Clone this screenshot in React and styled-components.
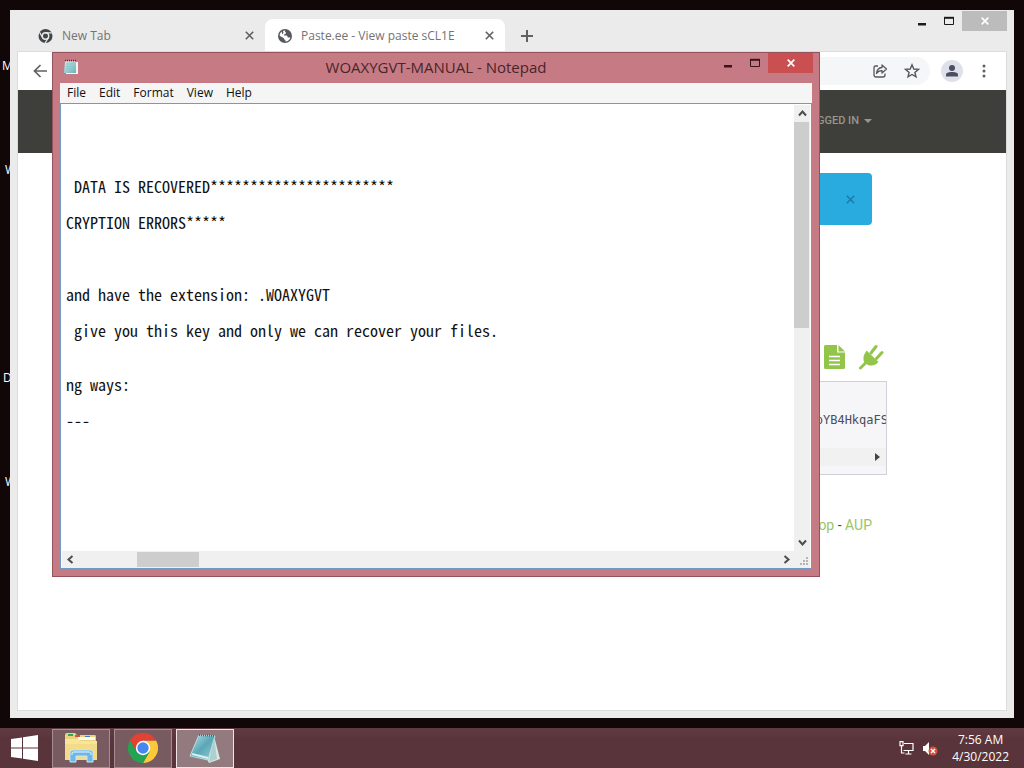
import React from "react";
import styled, { createGlobalStyle } from "styled-components";

const ui = `"Open Sans", "Noto Sans", sans-serif`;

const Global = createGlobalStyle`
  *, *::before, *::after { box-sizing: border-box; }
  html, body { margin: 0; height: 100%; }
  body { background: #110708; font-family: ${ui}; font-size: 12px; overflow: hidden; }
  #root { height: 100%; }
  button { font: inherit; color: inherit; background: none; border: 0; padding: 0; display: flex; align-items: center; justify-content: center; }
  svg { display: block; }
`;

const Desktop = styled.div`
  height: 100vh;
  display: flex;
  flex-direction: column;
  background: #120708;
`;

const Workspace = styled.main`
  position: relative;
  flex: 1;
  min-height: 0;
  display: flex;
  padding: 10px;
`;

const Shortcut = styled.a`
  position: absolute;
  left: ${(p) => p.$x}px;
  top: ${(p) => p.$y}px;
  color: #fff;
  font-size: 12px;
  line-height: 16px;
  text-decoration: none;
`;

/* Browser window */
const Browser = styled.section`
  position: relative;
  flex: 1;
  min-width: 0;
  display: flex;
  flex-direction: column;
  background: #ebebeb;
  padding: 0 8px 8px;
`;

const TabStrip = styled.div`
  display: flex;
  align-items: flex-end;
  height: 42px;
  padding-left: 7px;
`;

const Tab = styled.div`
  display: flex;
  align-items: center;
  gap: 9px;
  width: 240px;
  height: 33px;
  padding: 0 9px 0 13px;
  border-radius: 8px 8px 0 0;
  color: #737373;
  background: ${(p) => (p.$active ? "#fff" : "transparent")};
`;

const TabTitle = styled.span`
  flex: 1;
  white-space: nowrap;
  line-height: 16px;
`;

const TabButton = styled.button`
  width: 14px;
  height: 14px;
  color: #5f6063;
`;

const NewTab = styled(TabButton)`
  width: 44px;
  height: 33px;
`;

const Captions = styled.div`
  position: absolute;
  top: ${(p) => p.$top}px;
  right: ${(p) => p.$right}px;
  display: flex;
  color: ${(p) => p.$ink};
`;

const CaptionButton = styled.button`
  width: 27px;
  height: 20px;
`;

const CloseButton = styled(CaptionButton)`
  width: 45px;
  color: #fff;
  background: ${(p) => p.$fill};
`;

const View = styled.div`
  flex: 1;
  min-height: 0;
  display: flex;
  flex-direction: column;
  background: #fff;
  box-shadow: 0 0 0 1px #dcdcdc;
`;

const Toolbar = styled.div`
  display: flex;
  align-items: center;
  height: 38px;
  padding: 0 15px;
  color: #55585c;
`;

const AddressBar = styled.div`
  flex: 1;
  display: flex;
  align-items: center;
  justify-content: flex-end;
  gap: 16px;
  height: 28px;
  margin: 0 11px 0 60px;
  padding-right: 10px;
  border-radius: 14px;
  background: #f5f6f7;
`;

const Profile = styled.button`
  width: 22px;
  height: 22px;
  border-radius: 50%;
  background: #dfe1ea;
  margin-right: 14px;
`;

const NavBar = styled.nav`
  height: 63px;
  background: #3e3f3a;
  color: #98978b;
  font: 500 11px/22px Roboto, sans-serif;
`;

const Container = styled.div`
  display: flex;
  flex-direction: column;
  width: 750px;
  max-width: 100%;
  margin: 0 auto;
  padding: ${(p) => p.$pad || "0 15px"};
`;

const NavLink = styled.a`
  display: flex;
  align-items: center;
  align-self: flex-end;
  gap: 5px;
  padding: 20px 0;
  color: inherit;
  text-decoration: none;
`;

const Alert = styled.div`
  display: flex;
  align-items: center;
  justify-content: flex-end;
  height: 52px;
  padding-right: 17px;
  border-radius: 4px;
  background: #29abe0;
  color: #1c7ba5;
`;

const PasteTools = styled.div`
  display: flex;
  justify-content: flex-end;
  align-items: center;
  gap: 13px;
  margin-top: 119px;
  margin-right: -12px;
  color: #93c54b;
`;

const Paste = styled.div`
  display: flex;
  flex-direction: column;
  justify-content: flex-end;
  height: 94px;
  margin: 11px -15px 0;
  border: 1px solid #ced0da;
  background: #f6f6f9;
  color: #4c4d55;
  overflow: hidden;
`;

const Code = styled.code`
  align-self: flex-end;
  font: 12px/16px "DejaVu Sans Mono", monospace;
  margin-right: -2px;
`;

const PasteScroll = styled.div`
  display: flex;
  align-items: center;
  justify-content: flex-end;
  height: 18px;
  margin: 20px 0 8px;
  padding-right: 6px;
  background: #f1f1f2;
`;

const PageFooter = styled.footer`
  align-self: flex-end;
  margin-top: 40px;
  font: 14px/20px Roboto, sans-serif;
  color: #4a4a4a;
  a { color: #9dc468; text-decoration: none; }
`;

/* Notepad window */
const Notepad = styled.section`
  position: absolute;
  left: 52px;
  top: 52px;
  width: 75%;
  height: 525px;
  display: flex;
  flex-direction: column;
  padding: 0 7px 7px;
  border: 1px solid #94525c;
  background: #c67b84;
`;

const TitleBar = styled.header`
  display: flex;
  align-items: center;
  height: 30px;
  padding: 0 0 2px 4px;
`;

const WindowTitle = styled.h1`
  flex: 1;
  margin: 0 18px 0 0;
  font-size: 15px;
  font-weight: 400;
  line-height: 20px;
  text-align: center;
  color: #4a2429;
`;

const MenuBar = styled.div`
  display: flex;
  gap: 13px;
  height: 20px;
  padding: 0 0 2px 7px;
  background: #f5f5f5;
  color: #111;
`;

const Editor = styled.div`
  flex: 1;
  min-height: 0;
  display: grid;
  grid-template-columns: minmax(0, 1fr) 16px;
  grid-template-rows: minmax(0, 1fr) 17px;
  padding: 1px 1px 0;
  border: 1px solid #6f9cc4;
  background: #fff;
`;

const Note = styled.textarea`
  border: 0;
  outline: 0;
  resize: none;
  margin: 0;
  padding: 0 4px;
  overflow: hidden;
  white-space: pre;
  color: #111;
  background: #fff;
  font: 16px/18px "Noto Sans Mono CJK SC", "DejaVu Sans Mono", monospace;
`;

const Bar = styled.div`
  display: flex;
  flex-direction: ${(p) => (p.$vertical ? "column" : "row")};
  justify-content: space-between;
  background: #f0f0f0;
  color: #4d4d4d;
`;

const Arrow = styled.button`
  width: 16px;
  height: 17px;
`;

const Track = styled.div`
  flex: 1;
  display: flex;
  flex-direction: ${(p) => (p.$vertical ? "column" : "row")};
  padding-left: ${(p) => (p.$vertical ? 0 : "59px")};
`;

const Thumb = styled.div`
  width: ${(p) => (p.$vertical ? "15px" : "62px")};
  height: ${(p) => (p.$vertical ? "50%" : "15px")};
  margin-top: ${(p) => (p.$vertical ? 0 : "1px")};
  background: #cdcdcd;
`;

const Grip = styled.div`
  display: flex;
  align-items: flex-end;
  justify-content: flex-end;
  background: #f0f0f0;
`;

/* Taskbar */
const Taskbar = styled.footer`
  display: flex;
  align-items: center;
  gap: 4px;
  height: 40px;
  padding-right: 15px;
  background: linear-gradient(#603b41, #59343a 30%, #58343b);
  color: #fff;
`;

const Start = styled.button`
  width: 48px;
  height: 40px;
`;

const TaskButton = styled.button`
  width: 58px;
  height: 39px;
  border: 1px solid ${(p) => (p.$active ? "#f0e4e6" : "#a58d92")};
  background: ${(p) => (p.$active ? "#927a7f" : "#785b61")};
`;

const Tray = styled.div`
  flex: 1;
  display: flex;
  align-items: center;
  justify-content: flex-end;
  gap: 9px;
`;

const Clock = styled.time`
  margin-left: 5px;
  font-size: 12px;
  line-height: 17px;
  text-align: center;
`;

const Cross = ({ size = 9, width = 1.6 }) => (
  <svg width={size} height={size} viewBox="0 0 9 9" stroke="currentColor" strokeWidth={width} fill="none">
    <path d="M.8 .8 8.2 8.2M8.2 .8.8 8.2" />
  </svg>
);

const Chevron = ({ d }) => (
  <svg width="9" height="9" viewBox="0 0 9 9" stroke="currentColor" strokeWidth="2" fill="none"><path d={d} /></svg>
);

const WindowCaptions = ({ top, right, ink, fill }) => (
  <Captions $top={top} $right={right} $ink={ink}>
    <CaptionButton aria-label="Minimize">
      <svg width="8" height="20" viewBox="0 0 8 20"><path d="M0 12h8v2.500H0z" fill="currentColor" /></svg>
    </CaptionButton>
    <CaptionButton aria-label="Maximize">
      <svg width="10" height="20" viewBox="0 0 10 20" fill="none" stroke="currentColor"><path d="M.5 6.500h9v7h-9z" /><path d="M0 6.800h10" strokeWidth="2" /></svg>
    </CaptionButton>
    <CloseButton aria-label="Close" $fill={fill}><Cross size={8} width={1.9} /></CloseButton>
  </Captions>
);

const MonoChrome = () => (
  <svg width="15" height="14" viewBox="0 0 14 14">
    <circle cx="7" cy="7" r="7" fill="#44474a" />
    <circle cx="7" cy="7" r="3.200" fill="#44474a" stroke="#ebebeb" strokeWidth="1.400" />
    <path d="M7 3.800h6.300M4.200 8.600 1 3.200M9.800 8.600 6.600 14" stroke="#ebebeb" strokeWidth="1.200" />
  </svg>
);

const Globe = () => (
  <svg width="14" height="14" viewBox="0 0 14 14">
    <circle cx="7" cy="7" r="7" fill="#55595d" />
    <path d="M7.500 1.400C6.800 1.800 6.800 2.800 7.500 3.300 8.400 3.600 8 4.800 7 5 6 5.200 6.300 6.300 5.500 6.500H8.500C9.800 6.500 9 8.500 10.500 8.500H12.400C12 10.800 10 12.500 7.400 12.600V10.800C6.200 10.800 5.800 10 5.800 9 4.500 8.500 2.600 7.500 1.500 6.200 2 3.300 4.500 1.400 7.500 1.400Z" fill="#fff" />
    <path d="M4 2.200C5.500 3 4 4 5 4.600" stroke="#55595d" strokeWidth="1.500" fill="none" />
  </svg>
);

const NoteIcon = () => (
  <svg width="14" height="16" viewBox="0 0 14 16">
    <defs><linearGradient id="page" x2="1" y2="1"><stop stopColor="#c8eaea" /><stop offset="1" stopColor="#6cb2bb" /></linearGradient></defs>
    <path d="M2 3h12v12H2z" fill="#f2f4ed" />
    <path d="M1 2h11v12H0z" fill="url(#page)" />
    <path d="M1 1.500h12" stroke="#35393c" strokeWidth="1.500" strokeDasharray="1 1" />
    <path d="M2 5h8M2 7.500h8M2 10h8" stroke="#8ac6cb" />
  </svg>
);

const Explorer = () => (
  <svg width="34" height="32" viewBox="0 0 34 32">
    <path d="M1 3q0-2 2-2h8l2 2h18q1 0 1 2v22H1z" fill="#ead27b" />
    <path d="M4 2h5v2H4z" fill="#2da85d" /><path d="M11 3h5v2h-5z" fill="#d84d3d" /><path d="M21 4h5v2h-5z" fill="#377fce" />
    <path d="M14 5h17v3H14z" fill="#fffdf2" />
    <path d="M1 7h13l2 2h17v19H1z" fill="#f8e49a" />
    <path d="M1 12h32v16H1z" fill="#f3db87" />
    <path d="M6 30V21q0-3 3-3h17q3 0 3 3v9h-6v-6H12v6z" fill="#6cb7e7" stroke="#c4e8fb" />
    <path d="M8 23v-2q0-1 2-1h15q2 0 2 1v2" stroke="#eaf8ff" fill="none" />
  </svg>
);

const Chrome = () => (
  <svg width="30" height="30" viewBox="0 0 30 30">
    <path d="M28 7.500A15 15 0 0 1 15 30L21.500 18.700 15 7.500z" fill="#fcc93a" />
    <path d="M2 7.500 8.500 18.700 15 15V7.500H28A15 15 0 0 0 2 7.500z" fill="#e34133" />
    <path d="M2 7.500A15 15 0 0 0 15 30L21.500 18.700H8.500z" fill="#24a452" />
    <circle cx="15" cy="15" r="7.200" fill="#fff" /><circle cx="15" cy="15" r="5.700" fill="#4688ef" />
  </svg>
);

const NotepadLarge = () => (
  <svg width="32" height="30" viewBox="0 0 32 30">
    <defs><linearGradient id="sheet" x2="1" y2="1"><stop stopColor="#bbe1e7" /><stop offset=".5" stopColor="#5aa7b7" /><stop offset="1" stopColor="#9acbd3" /></linearGradient></defs>
    <path d="M25 3 31 26 20 30 17 24z" fill="#dce8e5" />
    <path d="M25 3 28 26 20 29z" fill="#acd0ce" />
    <path d="M10 2 26 3 19 27 1 23z" fill="url(#sheet)" stroke="#b8dde1" />
    <path d="M10 2 26 3" stroke="#4d6267" strokeWidth="2" strokeDasharray="1 1" />
    <path d="M3 21 19 25" stroke="#d8f1f2" strokeWidth="2" />
  </svg>
);

const note = "\n\n\n\n DATA IS RECOVERED***********************\n\nCRYPTION ERRORS*****\n\n\n\nand have the extension: .WOAXYGVT\n\n give you this key and only we can recover your files.\n\n\nng ways:\n\n---";

export default function App() {
  return (
    <Desktop>
      <Global />
      <Workspace>
        <Shortcut href="#" $x={2} $y={58}>M</Shortcut>
        <Shortcut href="#" $x={5} $y={162}>W</Shortcut>
        <Shortcut href="#" $x={3} $y={370}>D</Shortcut>
        <Shortcut href="#" $x={5} $y={474}>W</Shortcut>
        <Browser aria-label="Browser">
          <TabStrip>
            <Tab>
              <MonoChrome /><TabTitle>New Tab</TabTitle>
              <TabButton aria-label="Close New Tab"><Cross /></TabButton>
            </Tab>
            <Tab $active>
              <Globe /><TabTitle>Paste.ee - View paste sCL1E</TabTitle>
              <TabButton aria-label="Close Paste.ee"><Cross /></TabButton>
            </Tab>
            <NewTab aria-label="Open tab">
              <svg width="12" height="12" viewBox="0 0 12 12" stroke="currentColor" strokeWidth="2"><path d="M6 0v12M0 6h12" /></svg>
            </NewTab>
          </TabStrip>
          <WindowCaptions top={1} right={7} ink="#1b1b1b" fill="#bcbcbc" />
          <View>
            <Toolbar>
              <TabButton aria-label="Back">
                <svg width="14" height="14" viewBox="0 0 14 14" stroke="currentColor" strokeWidth="1.700" fill="none"><path d="M14 7H1.500M7.500 1l-6 6 6 6" /></svg>
              </TabButton>
              <AddressBar>
                <button aria-label="Share">
                  <svg width="16" height="16" viewBox="0 0 16 16" fill="none" stroke="currentColor" strokeWidth="1.300" strokeLinejoin="round"><path d="M6 3H3.500Q2 3 2 4.500v7Q2 14 4 14h7q2 0 2-2v-1.500" /><path d="M10 2l4.500 4-4.500 4V7.700Q6.500 7.500 4.500 10.500 5 5 10 4.500z" /></svg>
                </button>
                <button aria-label="Bookmark">
                  <svg width="16" height="16" viewBox="0 0 16 16" fill="none" stroke="currentColor" strokeWidth="1.400"><path d="m8 1.800 1.800 4.200 4.600.4-3.500 3 1.100 4.500L8 11.500l-4 2.400 1.100-4.500-3.500-3 4.600-.4z" /></svg>
                </button>
              </AddressBar>
              <Profile aria-label="Profile">
                <svg width="14" height="14" viewBox="0 0 14 14" fill="#4b4e61"><circle cx="7" cy="4" r="3" /><path d="M1 12.500V10.500C1 8.500 5 8 7 8s6 .5 6 2.500V12.500z" /></svg>
              </Profile>
              <TabButton aria-label="More">
                <svg width="4" height="14" viewBox="0 0 4 14" fill="currentColor"><circle cx="2" cy="2" r="1.500" /><circle cx="2" cy="7" r="1.500" /><circle cx="2" cy="12" r="1.500" /></svg>
              </TabButton>
            </Toolbar>
            <NavBar>
              <Container>
                <NavLink href="#">GGED IN <svg width="8" height="4" viewBox="0 0 8 4"><path d="M0 0h8L4 4z" fill="currentColor" /></svg></NavLink>
              </Container>
            </NavBar>
            <Container $pad="20px 15px">
              <Alert role="alert"><button aria-label="Dismiss"><Cross size={9} width={1.500} /></button></Alert>
              <PasteTools>
                <button aria-label="View raw">
                  <svg width="22" height="26" viewBox="0 0 22 26"><path d="M1.500 1H13v7.500h8V23.500Q21 25 19.500 25h-18Q0 25 0 23.500v-21Q0 1 1.500 1zM14.500 1 21 7.500h-6.500z" fill="currentColor" /><path d="M5 12.500h11M5 16.500h11M5 20.500h11" stroke="#fff" strokeWidth="1.500" /></svg>
                </button>
                <button aria-label="Plugin">
                  <svg width="25" height="26" viewBox="0 0 25 26"><path d="M1.500 24 7 18.500M12 9l5-6.500M17.500 14.500l5.500-6" stroke="currentColor" strokeWidth="3" strokeLinecap="round" /><path d="M7.500 6.500 19.500 18Q15 23 9 21 2.500 18 5 11z" fill="currentColor" /></svg>
                </button>
              </PasteTools>
              <Paste>
                <Code>pYB4HkqaFS</Code>
                <PasteScroll><svg width="5" height="8" viewBox="0 0 5 8"><path d="M0 0 5 4 0 8z" fill="#444" /></svg></PasteScroll>
              </Paste>
              <PageFooter><a href="#">op</a> - <a href="#">AUP</a></PageFooter>
            </Container>
          </View>
        </Browser>
        <Notepad aria-label="Notepad">
          <TitleBar><NoteIcon /><WindowTitle>WOAXYGVT-MANUAL - Notepad</WindowTitle></TitleBar>
          <WindowCaptions top={0} right={6} ink="#35161a" fill="#c94f50" />
          <MenuBar>
            {["File", "Edit", "Format", "View", "Help"].map((m) => <button key={m}>{m}</button>)}
          </MenuBar>
          <Editor>
            <Note aria-label="Text" defaultValue={note} spellCheck={false} wrap="off" />
            <Bar $vertical>
              <Arrow aria-label="Scroll up"><Chevron d="M1 6.500 4.500 2.500 8 6.500" /></Arrow>
              <Track $vertical><Thumb $vertical /></Track>
              <Arrow aria-label="Scroll down"><Chevron d="M1 2.500 4.500 6.500 8 2.500" /></Arrow>
            </Bar>
            <Bar>
              <Arrow aria-label="Scroll left"><Chevron d="M6.500 1 2.500 4.500 6.500 8" /></Arrow>
              <Track><Thumb /></Track>
              <Arrow aria-label="Scroll right"><Chevron d="M2.500 1 6.500 4.500 2.500 8" /></Arrow>
            </Bar>
            <Grip>
              <svg width="12" height="12" viewBox="0 0 12 12" fill="#b5b5b5"><path d="M8 1h2v2H8zM5 4h2v2H5zM8 4h2v2H8zM2 7h2v2H2zM5 7h2v2H5zM8 7h2v2H8z" /></svg>
            </Grip>
          </Editor>
        </Notepad>
      </Workspace>
      <Taskbar>
        <Start aria-label="Start">
          <svg width="27" height="26" viewBox="0 0 27 26" fill="#fff"><path d="M0 4 11 2.500V12.500H0zM12 2.300 27 0V12.500H12zM0 13.500H11V23.500L0 22zM12 13.500H27V26L12 23.700z" /></svg>
        </Start>
        <TaskButton aria-label="File Explorer"><Explorer /></TaskButton>
        <TaskButton aria-label="Chrome"><Chrome /></TaskButton>
        <TaskButton aria-label="Notepad" $active><NotepadLarge /></TaskButton>
        <Tray>
          <svg width="15" height="14" viewBox="0 0 15 14" fill="none" stroke="#fff" strokeWidth="1.200"><path d="M5 2.500h9v7H4.500M9.500 9.500v3M6.500 13h6M2.500 5v7h3" /><path d="M1 .7h3v4H1z" /></svg>
          <svg width="15" height="15" viewBox="0 0 15 15"><path d="M0 5h2l4-4v13l-4-4H0z" fill="#fff" /><circle cx="10" cy="10" r="4.500" fill="#d6513b" /><path d="m8 8 4 4m0-4-4 4" stroke="#fff" strokeWidth="1.400" /></svg>
          <Clock>7:56 AM<br />4/30/2022</Clock>
        </Tray>
      </Taskbar>
    </Desktop>
  );
}
